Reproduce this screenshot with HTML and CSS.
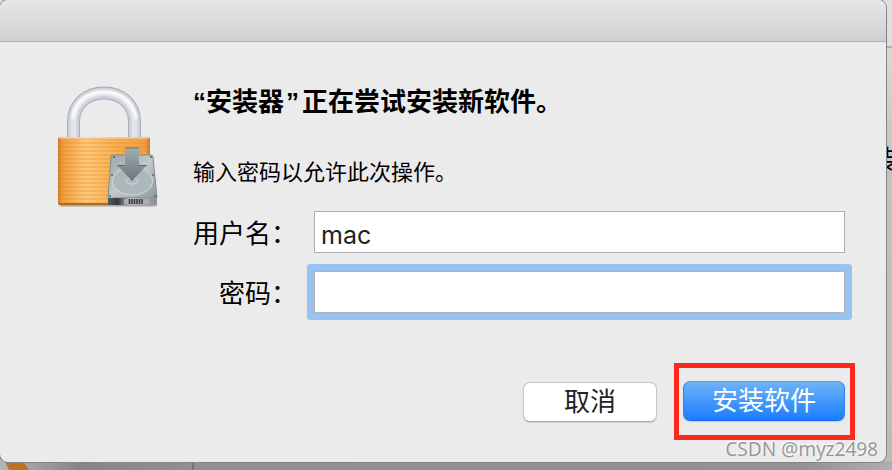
FILE: index.html
```html
<!DOCTYPE html>
<html lang="zh-CN">
<head>
<meta charset="utf-8">
<title>安装器</title>
<link rel="stylesheet" href="styles.css">
</head>
<body>
<div class="backdrop" aria-hidden="true">
  <div class="backdrop-bar"></div>
  <div class="backdrop-body"><span class="backdrop-text">装</span></div>
  <svg class="backdrop-art" width="194" height="9" viewBox="0 0 194 9">
    <path d="M5 0H23L29 9H9Z" fill="#b87325"/>
    <path d="M192 0H194V9H192Z" fill="#737373"/>
  </svg>
</div>
<main class="dialog">
  <header class="titlebar"></header>
  <div class="content">
    <svg class="lock" width="112" height="128" viewBox="52 82 112 128" role="img" aria-label="锁">
      <defs>
        <linearGradient id="gold" x1="0" x2="1"><stop offset="0" stop-color="#c97920"/><stop offset=".04" stop-color="#f09a38"/><stop offset=".3" stop-color="#ffc978"/><stop offset=".65" stop-color="#f9ad4e"/><stop offset=".95" stop-color="#efa042"/><stop offset="1" stop-color="#c97b22"/></linearGradient>
        <pattern id="ribs" width="4" height="4" patternUnits="userSpaceOnUse"><path d="M0 3H4" stroke="#d48124" stroke-opacity=".45"/></pattern>
        <linearGradient id="steel" x1="0" x2="1" y2="1"><stop offset="0" stop-color="#9ba6aa"/><stop offset=".5" stop-color="#c0c8ca"/><stop offset="1" stop-color="#8d999e"/></linearGradient>
        <linearGradient id="arrow" x2="0" y2="1"><stop offset="0" stop-color="#a2adb1"/><stop offset="1" stop-color="#69767b"/></linearGradient>
        <linearGradient id="base"><stop offset="0" stop-color="#545b5e"/><stop offset=".2" stop-color="#333a3d"/><stop offset=".45" stop-color="#b5babb"/><stop offset="1" stop-color="#8a9295"/></linearGradient>
        <filter id="soft" x="-20%" y="-20%" width="140%" height="140%"><feGaussianBlur stdDeviation="1"/></filter>
      </defs>
      <path d="M60 204H156V206H60Z" fill="#777" filter="url(#soft)"/>
      <g fill="none">
        <path d="M73.500 138V122C73.500 104 87 93 104 93C121 93 134.500 104 134.500 122V138" stroke="#a8abb4" stroke-width="13"/>
        <path d="M73.500 138V122C73.500 104 87 93 104 93C121 93 134.500 104 134.500 122V138" stroke="#cdd1d9" stroke-width="11"/>
        <path d="M73.500 138V122C73.500 104 87 93 104 93C121 93 134.500 104 134.500 122V138" stroke="#e2e4ea" stroke-width="6"/>
        <path d="M73 119C73 104 86 92 104 92C122 92 134 103 136 119" stroke="#fff" stroke-width="3" filter="url(#soft)"/>
      </g>
      <rect x="58" y="137" width="92" height="68" rx="2" fill="url(#gold)"/>
      <rect x="58" y="138" width="92" height="66" fill="url(#ribs)"/>
      <path d="M59 138H149" stroke="#ffe6b5"/>
      <path d="M59 204H110" stroke="#b46b1e" stroke-width="2"/>
      <path d="M112 155H151Q153 155 153 157L157 198H108L111 157Q111 155 112 155Z" fill="url(#steel)" stroke="#7f8b90"/>
      <ellipse cx="132.500" cy="181" rx="20" ry="14" fill="#adb8bc" stroke="#d4dadc"/>
      <ellipse cx="132" cy="181" rx="6" ry="3" fill="none" stroke="#d4dadc"/>
      <path d="M108 198H157V205H108Z" fill="url(#base)"/>
      <path d="M124 199H149V204H124Z" fill="#a9afb1"/>
      <path d="M129.500 199V204M132 199V204M134.500 199V204M137 199V204M139.500 199V204M142 199V204" stroke="#33393b" stroke-width="1.500"/>
      <path d="M125 148H139V165H147L132 181L117 165H125Z" fill="url(#arrow)"/>
      <path d="M125 148H139" stroke="#66757b"/>
      <path d="M117 165.500H125M139 165.500H147" stroke="#5e6b70"/>
      <g fill="#53636b"><circle cx="114" cy="157" r="1"/><circle cx="151" cy="157" r="1"/><circle cx="112" cy="175" r="1"/><circle cx="153" cy="175" r="1"/><circle cx="110" cy="196" r="1"/><circle cx="155" cy="196" r="1"/></g>
    </svg>
    <form class="form">
      <h1 class="title"><span class="quote">“</span>安装器<span class="quote closing">”</span>正在尝试安装新软件。</h1>
      <p class="message">输入密码以允许此次操作。</p>
      <div class="fields">
        <label for="user">用户名：</label>
        <input id="user" class="field" type="text" value="mac">
        <label for="password">密码：</label>
        <input id="password" class="field focused" type="password">
      </div>
      <div class="actions">
        <button class="button" type="button">取消</button>
        <div class="highlight"><button class="button primary" type="button">安装软件</button></div>
      </div>
    </form>
  </div>
</main>
<div class="watermark">CSDN @myz2498</div>
</body>
</html>
```
FILE: styles.css
```css
* { box-sizing: border-box; }
body {
  margin: 0;
  min-height: 100vh;
  padding: 0 6px 8px 0;
  display: flex;
  position: relative;
  overflow: hidden;
  background: #929292;
  color: #000;
  font-family: "Noto Sans CJK SC", sans-serif;
}
.backdrop {
  position: absolute;
  inset: 0;
  display: flex;
  flex-direction: column;
  overflow: hidden;
}
.backdrop-bar { height: 48px; background: #dedede; border-bottom: 2px solid #b0b0b0; }
.backdrop-body {
  flex: 1;
  background: linear-gradient(#d8d8d8, #c2c2c2 30%, #bcbcbc);
}
.backdrop-text {
  position: absolute;
  right: -4px;
  top: 139px;
  font-size: 26px;
  line-height: 38px;
}
.backdrop::after {
  content: "";
  height: 9px;
  background: linear-gradient(90deg, #b4b4b4, #868686 80px, #919191 200px, #929292 90%, #b0b0b0);
}
.backdrop-art { position: absolute; left: 0; bottom: 0; }
.dialog {
  position: relative;
  flex: 1;
  display: flex;
  flex-direction: column;
  background: #ebebeb;
  border-radius: 8px;
  overflow: hidden;
  box-shadow: 0 0 0 1px #858585;
}
.titlebar {
  height: 42px;
  background: linear-gradient(#e8e6e9, #d0ced1);
  border-bottom: 1px solid #b1afb2;
}
.content {
  flex: 1;
  display: flex;
  gap: 29px;
  padding: 40px 31px 22px 52px;
}
.lock { flex: none; }
.form { flex: 1; display: flex; flex-direction: column; margin: 0; }
.title {
  margin: 0;
  font-size: 26px;
  font-weight: 600;
  line-height: 36px;
}
.quote { font-family: "Liberation Sans", sans-serif; line-height: 1; }
.closing { padding: 0 3px 0 2px; }
.message { margin: 36px 0 0; font-size: 22px; line-height: 32px; }
.fields {
  display: grid;
  grid-template-columns: auto 1fr;
  gap: 18px 17px;
  align-items: center;
  margin: 25px 10px 0 0;
  font-size: 26px;
}
.fields label { text-align: right; line-height: 38px; }
.field {
  width: 100%;
  height: 42px;
  padding: 6px 6px 0;
  border: 1px solid #b1b1b1;
  border-radius: 0;
  outline: 0;
  background: #fff;
  color: #222;
  font-family: Inter, sans-serif;
  font-size: 25px;
}
.focused { box-shadow: 0 0 0 7px #97c2f1; border-radius: 1px; }
.actions {
  display: flex;
  justify-content: flex-end;
  align-items: center;
  gap: 17px;
  margin-top: auto;
}
.button {
  width: 134px;
  height: 40px;
  padding: 0 0 4px;
  border: 1px solid #c4c4c4;
  border-bottom-color: #aaa;
  border-radius: 7px;
  background: #fff;
  box-shadow: 0 1px 1px #d0d0d0;
  color: #222;
  font-family: inherit;
  font-size: 26px;
  line-height: 34px;
}
.highlight { padding: 13px 5px 14px 4px; border: 5px solid #fc2a1c; }
.primary {
  display: block;
  width: 162px;
  border-color: #4a9bee #2b82f5 #1564f4;
  background: linear-gradient(#6fb3f8, #1a7dfe);
  color: #fff;
}
.watermark {
  position: absolute;
  right: 14px;
  bottom: 8px;
  font-family: "Noto Sans", sans-serif;
  font-size: 19px;
  line-height: 26px;
  color: #999;
  text-shadow: -1px -1px 0 #fff;
}
```
